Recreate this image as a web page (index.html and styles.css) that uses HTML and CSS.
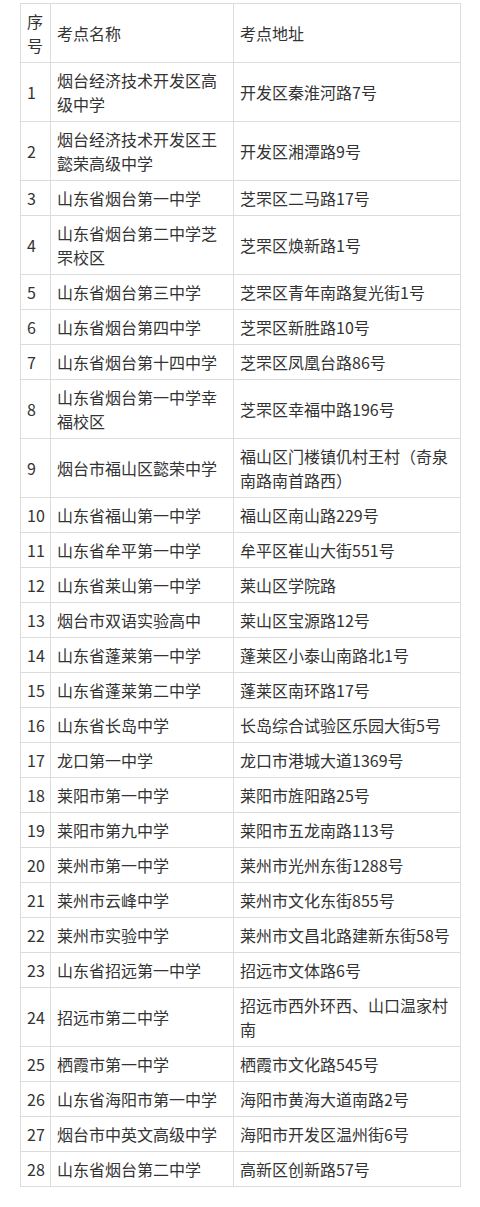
FILE: index.html
```html
<!DOCTYPE html>
<html lang="zh-CN">
<head>
<meta charset="utf-8">
<title>考点</title>
<link rel="stylesheet" href="styles.css">
</head>
<body>
<div class="wrap">
<table class="exam">
<colgroup><col class="c-no"><col class="c-name"><col class="c-addr"></colgroup>
<tr><td>序号</td><td>考点名称</td><td>考点地址</td></tr>
<tr><td>1</td><td>烟台经济技术开发区高级中学</td><td>开发区秦淮河路7号</td></tr>
<tr><td>2</td><td>烟台经济技术开发区王懿荣高级中学</td><td>开发区湘潭路9号</td></tr>
<tr><td>3</td><td>山东省烟台第一中学</td><td>芝罘区二马路17号</td></tr>
<tr><td>4</td><td>山东省烟台第二中学芝罘校区</td><td>芝罘区焕新路1号</td></tr>
<tr><td>5</td><td>山东省烟台第三中学</td><td>芝罘区青年南路复光街1号</td></tr>
<tr><td>6</td><td>山东省烟台第四中学</td><td>芝罘区新胜路10号</td></tr>
<tr><td>7</td><td>山东省烟台第十四中学</td><td>芝罘区凤凰台路86号</td></tr>
<tr><td>8</td><td>山东省烟台第一中学幸福校区</td><td>芝罘区幸福中路196号</td></tr>
<tr><td>9</td><td>烟台市福山区懿荣中学</td><td>福山区门楼镇仉村王村（奇泉南路南首路西）</td></tr>
<tr><td>10</td><td>山东省福山第一中学</td><td>福山区南山路229号</td></tr>
<tr><td>11</td><td>山东省牟平第一中学</td><td>牟平区崔山大街551号</td></tr>
<tr><td>12</td><td>山东省莱山第一中学</td><td>莱山区学院路</td></tr>
<tr><td>13</td><td>烟台市双语实验高中</td><td>莱山区宝源路12号</td></tr>
<tr><td>14</td><td>山东省蓬莱第一中学</td><td>蓬莱区小泰山南路北1号</td></tr>
<tr><td>15</td><td>山东省蓬莱第二中学</td><td>蓬莱区南环路17号</td></tr>
<tr><td>16</td><td>山东省长岛中学</td><td>长岛综合试验区乐园大街5号</td></tr>
<tr><td>17</td><td>龙口第一中学</td><td>龙口市港城大道1369号</td></tr>
<tr><td>18</td><td>莱阳市第一中学</td><td>莱阳市旌阳路25号</td></tr>
<tr><td>19</td><td>莱阳市第九中学</td><td>莱阳市五龙南路113号</td></tr>
<tr><td>20</td><td>莱州市第一中学</td><td>莱州市光州东街1288号</td></tr>
<tr><td>21</td><td>莱州市云峰中学</td><td>莱州市文化东街855号</td></tr>
<tr><td>22</td><td>莱州市实验中学</td><td>莱州市文昌北路建新东街58号</td></tr>
<tr><td>23</td><td>山东省招远第一中学</td><td>招远市文体路6号</td></tr>
<tr><td>24</td><td>招远市第二中学</td><td>招远市西外环西、山口温家村南</td></tr>
<tr><td>25</td><td>栖霞市第一中学</td><td>栖霞市文化路545号</td></tr>
<tr><td>26</td><td>山东省海阳市第一中学</td><td>海阳市黄海大道南路2号</td></tr>
<tr><td>27</td><td>烟台市中英文高级中学</td><td>海阳市开发区温州街6号</td></tr>
<tr><td>28</td><td>山东省烟台第二中学</td><td>高新区创新路57号</td></tr>
</table>
</div>
</body>
</html>
```

FILE: styles.css
```css
html, body {
  margin: 0;
  padding: 0;
  background: #ffffff;
}
.wrap {
  padding: 3px 20px 0 20px;
}
.exam {
  width: 440px;
  table-layout: fixed;
  border-collapse: collapse;
  font-family: "Noto Sans CJK SC", "Noto Sans", sans-serif;
  font-size: 16px;
  line-height: 24px;
  color: #333333;
}
.c-no { width: 30px; }
.c-name { width: 183px; }
.c-addr { width: 227px; }
.exam td {
  border: 1px solid #dcdcdc;
  padding: 5px 5px 5px 6px;
  vertical-align: middle;
  word-break: break-all;
}
```
